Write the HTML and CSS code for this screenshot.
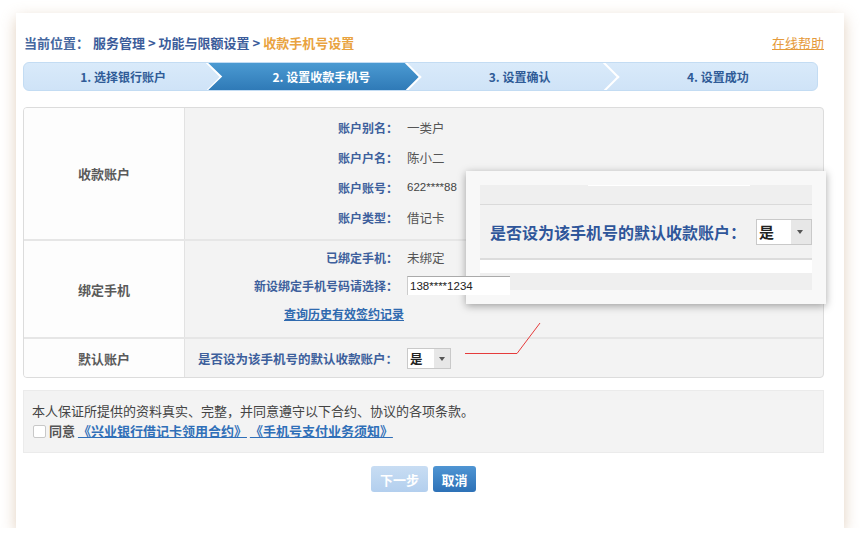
FILE: index.html
```html
<!DOCTYPE html>
<html lang="zh-CN">

<head>
    <meta charset="UTF-8">
    <title>收款手机号设置</title>
    <link rel="stylesheet" href="styles.css">
</head>

<body>
    <div class="page">
        <div class="crumb">
            <div>
                <span class="crumb-title">当前位置：</span>
                <span class="crumb-path">服务管理 &gt; 功能与限额设置 &gt; </span><span class="crumb-current">收款手机号设置</span>
            </div>
            <a class="help" href="#">在线帮助</a>
        </div>

        <ol class="steps">
            <li class="step">1. 选择银行账户</li>
            <li class="step active">2. 设置收款手机号</li>
            <li class="step">3. 设置确认</li>
            <li class="step">4. 设置成功</li>
        </ol>

        <div class="form-table">
            <div class="row">
                <div class="row-title">收款账户</div>
                <div class="row-body body-account">
                    <span class="label">账户别名：</span><span class="value">一类户</span>
                    <span class="label">账户户名：</span><span class="value">陈小二</span>
                    <span class="label">账户账号：</span><span class="value num">622****88</span>
                    <span class="label">账户类型：</span><span class="value">借记卡</span>
                </div>
            </div>
            <div class="row">
                <div class="row-title">绑定手机</div>
                <div class="row-body body-phone">
                    <span class="label">已绑定手机：</span><span class="value">未绑定</span>
                    <span class="label">新设绑定手机号码请选择：</span>
                    <span class="value"><span class="phone-input">138****1234</span></span>
                    <a class="history" href="#">查询历史有效签约记录</a>
                </div>
            </div>
            <div class="row">
                <div class="row-title">默认账户</div>
                <div class="row-body body-default">
                    <span class="label">是否设为该手机号的默认收款账户：</span>
                    <span class="value"><span class="select"><span class="select-val">是</span><span class="select-arrow"></span></span></span>
                </div>
            </div>
        </div>

        <div class="agree">
            <p>本人保证所提供的资料真实、完整，并同意遵守以下合约、协议的各项条款。</p>
            <p><span class="checkbox"></span><b>同意</b> <a href="#">《兴业银行借记卡领用合约》</a> <a href="#">《手机号支付业务须知》</a></p>
        </div>

        <div class="actions">
            <button class="btn btn-next">下一步</button>
            <button class="btn btn-cancel">取消</button>
        </div>

        <!-- zoomed callout -->
        <svg class="pointer" width="80" height="40" viewBox="0 0 80 40">
            <polyline points="0,34.5 52,34.5 75,4" fill="none" stroke="#e53b3b" stroke-width="1" />
        </svg>
        <div class="zoom-box">
            <div class="zoom-top"><span></span></div>
            <div class="zoom-mid">
                <span class="zoom-label">是否设为该手机号的默认收款账户：</span>
                <span class="select select-big"><span class="select-val">是</span><span class="select-arrow"></span></span>
            </div>
            <div class="zoom-white"></div>
            <div class="zoom-bottom"></div>
        </div>
    </div>
</body>

</html>
```

FILE: styles.css
```css
/* page frame */
body {
    margin: 0;
    background: #fff;
    font-family: "Noto Sans CJK SC", "Liberation Sans", sans-serif;
    font-size: 12px;
    color: #555;
}

.page {
    position: relative;
    width: 828px;
    height: 515px;
    margin: 13px 0 0 16px;
    padding: 20px 20px 0 7px;
    box-sizing: border-box;
    background: #fff;
    box-shadow: 0 5px 14px rgba(190, 150, 110, 0.45);
}

a {
    text-decoration: underline;
}

/* breadcrumb */
.crumb {
    display: flex;
    justify-content: space-between;
    height: 20px;
    line-height: 20px;
    font-size: 13px;
    font-weight: bold;
    padding-left: 1px;
}

.crumb-title {
    color: #45679f;
    margin-right: 1px;
}

.crumb-path {
    color: #3b5c9a;
}

.crumb-current {
    color: #e9a33f;
}

.help {
    color: #e59a3a;
    font-weight: normal;
}

/* steps */
.steps {
    display: flex;
    list-style: none;
    margin: 9px 6px 0 0;
    padding: 0;
    height: 27px;
    border: 1px solid #c3dcf3;
    border-radius: 6px;
    background: linear-gradient(#d9eafa, #cfe3f7);
    overflow: hidden;
    position: relative;
    isolation: isolate;
}

.step {
    flex: 1;
    position: relative;
    text-align: center;
    line-height: 27px;
    font-size: 12px;
    font-weight: bold;
    color: #2f5b97;
    z-index: 1;
}

.step::after {
    content: "";
    position: absolute;
    top: 50%;
    right: 4px;
    width: 20px;
    height: 20px;
    border-top: 2px solid #fff;
    border-right: 2px solid #fff;
    transform: translateY(-50%) rotate(45deg);
    z-index: 2;
}

.step:last-child::after {
    display: none;
}

.step.active {
    color: #fff;
}

.step.active::before {
    content: "";
    position: absolute;
    top: 0;
    bottom: 0;
    left: -14px;
    right: 0;
    background: linear-gradient(#4b9ad2, #2f7ab7);
    clip-path: polygon(0 0, calc(100% - 14px) 0, 100% 50%, calc(100% - 14px) 100%, 0 100%, 14px 50%);
    z-index: -1;
}

/* form table */
.form-table {
    margin-top: 16px;
    border: 1px solid #dcdcdc;
    border-radius: 4px;
    overflow: hidden;
    background: #f3f3f3;
}

.row {
    display: flex;
}

.row + .row {
    border-top: 2px solid #e6e6e6;
}

.row-title {
    width: 160px;
    flex-shrink: 0;
    display: flex;
    align-items: center;
    justify-content: center;
    background: #fdfdfd;
    border-right: 1px solid #e2e2e2;
    font-size: 13px;
    font-weight: bold;
    color: #5a5a5a;
}

.row-body {
    flex: 1;
    display: grid;
    grid-template-columns: 213px 1fr;
    column-gap: 9px;
    align-items: center;
}

.body-account {
    grid-auto-rows: 30px;
    padding: 4px 0 7px;
}

.body-phone {
    grid-auto-rows: 28px;
    padding: 2px 0 10px;
}

.body-default {
    height: 38px;
}

.body-default .label {
    font-size: 12.5px;
}

.label {
    text-align: right;
    font-weight: bold;
    color: #3d5f9c;
}

.value {
    font-size: 12.5px;
    color: #555;
}

.num {
    font-family: "Liberation Sans", sans-serif;
    font-size: 11.5px;
    color: #444;
}

.phone-input {
    position: relative;
    z-index: 5;
    display: inline-block;
    width: 100px;
    height: 18px;
    line-height: 19px;
    padding-left: 2px;
    background: #fff;
    border-top: 1px solid #aaa;
    border-left: 1px solid #ccc;
    font-family: "Liberation Sans", sans-serif;
    font-size: 11.5px;
    color: #222;
}

.history {
    grid-column: 1;
    justify-self: end;
    margin-right: -6px;
    color: #2f6aaf;
    font-weight: bold;
}

/* fake select */
.select {
    display: inline-flex;
    height: 19px;
    border: 1px solid #c9c9c9;
    background: #fff;
    vertical-align: middle;
}

.select-val {
    width: 24px;
    padding-left: 2px;
    line-height: 19px;
    font-weight: bold;
    color: #222;
}

.select-arrow {
    width: 16px;
    background: #e7e7e7;
    position: relative;
}

.select-arrow::after {
    content: "";
    position: absolute;
    left: 5px;
    top: 8px;
    border-left: 3.5px solid transparent;
    border-right: 3.5px solid transparent;
    border-top: 4px solid #555;
}

/* agreement */
.agree {
    margin-top: 12px;
    padding: 10px 8px 11px;
    background: #f3f3f3;
    border: 1px solid #ebebeb;
    font-size: 13px;
    line-height: 20px;
    color: #444;
}

.agree p {
    margin: 0;
}

.agree b {
    color: #555;
}

.agree a {
    color: #2f6fb8;
    font-weight: bold;
}

.checkbox {
    display: inline-block;
    width: 11px;
    height: 11px;
    margin: 0 3px 0 1px;
    border: 1px solid #c8c8c8;
    border-radius: 2px;
    background: #fff;
    vertical-align: -2px;
}

/* buttons */
.actions {
    display: flex;
    justify-content: center;
    gap: 5px;
    margin-top: 13px;
}

.btn {
    height: 26px;
    border: none;
    border-radius: 3px;
    font-family: inherit;
    font-size: 13px;
    font-weight: bold;
    color: #fff;
    cursor: pointer;
}

.btn-next {
    width: 57px;
    background: linear-gradient(#c8ddf3, #b3cfee);
}

.btn-cancel {
    width: 43px;
    background: linear-gradient(#4f95d3, #2d71b7);
}

/* callout */
.pointer {
    position: absolute;
    left: 449px;
    top: 306px;
}

.zoom-box {
    position: absolute;
    left: 450px;
    top: 158px;
    width: 360px;
    height: 133px;
    padding: 14px 14px 0;
    box-sizing: border-box;
    background: #f8f8f8;
    box-shadow: 0 2px 8px rgba(0, 0, 0, 0.35);
    z-index: 4;
}

.zoom-top {
    height: 19px;
    background: #efefef;
    border-bottom: 1px solid #dadada;
    position: relative;
}

.zoom-top span {
    position: absolute;
    left: 108px;
    width: 162px;
    top: 0;
    height: 1px;
    background: #fff;
}

.zoom-mid {
    height: 53px;
    display: flex;
    align-items: center;
    padding-left: 10px;
    background: #f2f2f2;
    border-bottom: 2px solid #dcdcdc;
}

.zoom-label {
    font-size: 16px;
    font-weight: bold;
    color: #2f569a;
    margin-right: 10px;
}

.select-big {
    height: 24px;
}

.select-big .select-val {
    width: 32px;
    line-height: 24px;
    font-size: 15px;
}

.select-big .select-arrow {
    width: 20px;
}

.select-big .select-arrow::after {
    left: 6px;
    top: 10px;
}

.zoom-white {
    height: 13px;
    background: #fff;
}

.zoom-bottom {
    height: 17px;
    background: #efefef;
}
```
